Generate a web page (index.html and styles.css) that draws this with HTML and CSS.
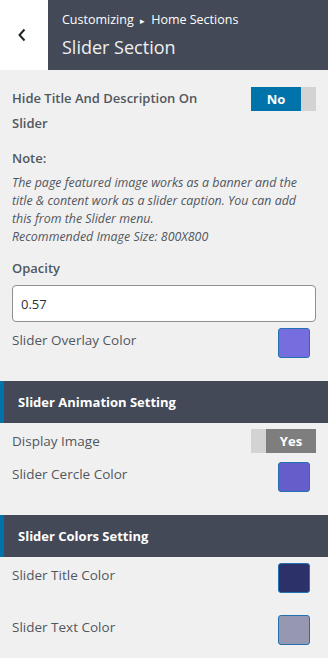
FILE: index.html
```html
<!DOCTYPE html>
<html lang="en">
<head>
    <meta charset="UTF-8">
    <meta name="viewport" content="width=device-width, initial-scale=1.0">
    <title>Slider Section</title>
    <link rel="stylesheet" href="styles.css">
</head>
<body>

    <div class="top-bar">
        <a class="back-btn" href="#">
            <svg width="10" height="14" viewBox="0 0 10 14"><polyline points="7.5,1.5 2.5,7 7.5,12.5" fill="none" stroke="#1d2327" stroke-width="2"/></svg>
        </a>
        <div class="title-box">
            <div class="crumbs">Customizing <span class="arrow">&#9656;</span> Home Sections</div>
            <h2>Slider Section</h2>
        </div>
    </div>

    <div class="panel">
        <div class="row first">
            <div class="label big">Hide Title And Description On Slider</div>
            <div class="toggle off"><span class="on-part">No</span><span class="rest"></span></div>
        </div>

        <div class="label note">Note:</div>
        <p class="desc">The page featured image works as a banner and the title &amp; content work as a slider caption. You can add this from the Slider menu.<br>Recommended Image Size: 800X800</p>

        <div class="label opacity">Opacity</div>
        <input type="text" class="input-field" value="0.57">

        <div class="row color-row overlay">
            <div class="label plain">Slider Overlay Color</div>
            <span class="swatch" style="background-color:#766ede;"></span>
        </div>
    </div>

    <div class="section-head">Slider Animation Setting</div>

    <div class="panel">
        <div class="row toggle-row">
            <div class="label plain">Display Image</div>
            <div class="toggle yes"><span class="rest"></span><span class="on-part">Yes</span></div>
        </div>
        <div class="row color-row cercle">
            <div class="label plain">Slider Cercle Color</div>
            <span class="swatch" style="background-color:#655dc9;"></span>
        </div>
    </div>

    <div class="section-head">Slider Colors Setting</div>

    <div class="panel">
        <div class="row color-row title-color">
            <div class="label plain">Slider Title Color</div>
            <span class="swatch" style="background-color:#2d3169;"></span>
        </div>
        <div class="row color-row text-color">
            <div class="label plain">Slider Text Color</div>
            <span class="swatch" style="background-color:#9697b0;"></span>
        </div>
    </div>

</body>
</html>
```

FILE: styles.css
```css
body {
    margin: 0;
    background-color: #f0f0f1;
    color: #50575e;
    font-family: 'Open Sans', sans-serif;
    font-size: 13px;
}
.top-bar {
    display: flex;
    height: 70px;
}
.back-btn {
    width: 48px;
    background-color: #fff;
    display: flex;
    align-items: center;
    justify-content: center;
}
.back-btn svg { margin-right: 4px; }
.title-box {
    flex: 1;
    background-color: #434956;
    padding: 11px 0 0 14px;
    color: #fff;
}
.crumbs {
    font-size: 12.5px;
    line-height: 18px;
}
.crumbs .arrow {
    font-size: 9px;
    margin: 0 3px;
}
.title-box h2 {
    margin: 3px 0 0;
    font-size: 18px;
    font-weight: 400;
    line-height: 28px;
    color: #f0f0f1;
}
.panel {
    padding: 0 12px;
}
.row {
    display: flex;
    justify-content: space-between;
    align-items: flex-start;
}
.row.first { padding-top: 16px; }
.label {
    font-size: 13px;
    line-height: 20px;
}
.label.big {
    font-weight: 600;
    line-height: 25px;
    width: 210px;
}
.label.note, .label.opacity {
    font-weight: 600;
    margin-top: 12px;
}
.label.plain {
    font-size: 13.5px;
    line-height: 24px;
}
.toggle {
    display: flex;
    width: 65px;
    height: 24px;
    margin-top: 1px;
    font-weight: 700;
    font-size: 13px;
    color: #fff;
}
.toggle .rest {
    width: 15px;
    background-color: #d3d3d3;
}
.toggle .on-part {
    flex: 1;
    display: flex;
    align-items: center;
    justify-content: center;
}
.toggle.off .on-part { background-color: #0073aa; }
.toggle.yes .on-part { background-color: #7e7e7e; }
.desc {
    margin: 6px 0 0;
    font-style: italic;
    font-size: 12.4px;
    line-height: 18px;
}
.input-field {
    display: block;
    box-sizing: border-box;
    width: 100%;
    height: 37px;
    margin-top: 7px;
    padding: 0 8px;
    border: 1px solid #8c8f94;
    border-radius: 4px;
    background-color: #fff;
    color: #2c3338;
    font-family: 'Open Sans', sans-serif;
    font-size: 13px;
}
.swatch {
    width: 30px;
    height: 28px;
    margin-right: 6px;
    border: 1px solid #2271b1;
    border-radius: 3px;
}
.color-row.overlay { margin-top: 6px; }
.color-row.cercle { margin-top: 9px; }
.color-row.title-color { margin-top: 6px; }
.color-row.text-color { margin-top: 22px; }
.section-head {
    margin-top: 23px;
    height: 42px;
    display: flex;
    align-items: center;
    background-color: #434956;
    border-left: 4px solid #0073aa;
    padding-left: 14px;
    color: #fff;
    font-weight: 700;
    font-size: 13px;
}
.toggle-row { margin-top: 6px; }
.toggle-row .toggle { margin-top: 0; }
```
